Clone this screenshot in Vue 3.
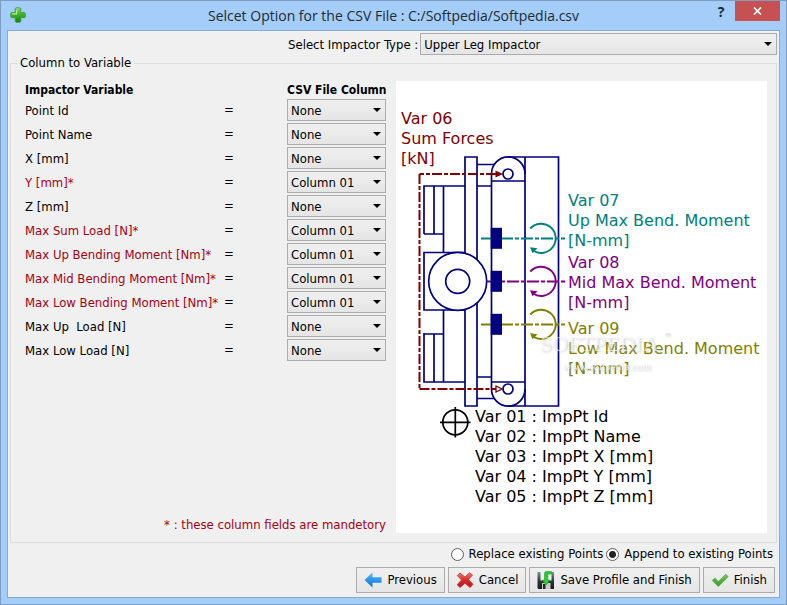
<script setup>
import { ref, reactive } from 'vue'

const impactor = ref('Upper Leg Impactor')
const mode = ref('append')

const rows = reactive([
  { id: 'point-id', label: 'Point Id', required: false, value: 'None' },
  { id: 'point-name', label: 'Point Name', required: false, value: 'None' },
  { id: 'x', label: 'X [mm]', required: false, value: 'None' },
  { id: 'y', label: 'Y [mm]*', required: true, value: 'Column 01' },
  { id: 'z', label: 'Z [mm]', required: false, value: 'None' },
  { id: 'sum-load', label: 'Max Sum Load [N]*', required: true, value: 'Column 01' },
  { id: 'up-moment', label: 'Max Up Bending Moment [Nm]*', required: true, value: 'Column 01' },
  { id: 'mid-moment', label: 'Max Mid Bending Moment [Nm]*', required: true, value: 'Column 01' },
  { id: 'low-moment', label: 'Max Low Bending Moment [Nm]*', required: true, value: 'Column 01' },
  { id: 'up-load', label: 'Max Up  Load [N]', required: false, value: 'None' },
  { id: 'low-load', label: 'Max Low Load [N]', required: false, value: 'None' },
])

const columns = ['None', 'Column 01']

const moments = [
  { y: 158, start: 85, color: '#008080', textY: 126, lines: ['Var 07', 'Up Max Bend. Moment', '[N-mm]'] },
  { y: 201, start: 91, color: '#800080', textY: 188, lines: ['Var 08', 'Mid Max Bend. Moment', '[N-mm]'] },
  { y: 244, start: 85, color: '#808000', textY: 254, lines: ['Var 09', 'Low Max Bend. Moment', '[N-mm]'] },
]

const points = ['Var 01 : ImpPt Id', 'Var 02 : ImpPt Name', 'Var 03 : ImpPt X [mm]', 'Var 04 : ImpPt Y [mm]', 'Var 05 : ImpPt Z [mm]']
</script>

<template>
  <div class="window">
    <header class="titlebar">
      <svg class="app-icon" viewBox="0 0 16 16" aria-hidden="true">
        <defs>
          <linearGradient id="plus" x1="0" y1="0" x2="0" y2="1">
            <stop offset="0" stop-color="#7fd063" />
            <stop offset="0.5" stop-color="#3fae2c" />
            <stop offset="1" stop-color="#16800f" />
          </linearGradient>
        </defs>
        <path d="M6 .8h4l.8.8v3.9h3.7l.8.8v3.6l-.8.8h-3.7v3.7l-.8.9H6l-.8-.9v-3.7H1.5l-.8-.8V6.300l.8-.8h3.700V1.600z" fill="url(#plus)" stroke="#3d9936" stroke-width=".8" />
        <path d="M6.500 2h2M2 6.900h4.600V3" stroke="#b5ec9c" stroke-width="1.200" fill="none" />
      </svg>
      <h1>Selcet Option for the CSV File : C:/Softpedia/Softpedia.csv</h1>
      <button class="help" type="button" aria-label="Help">?</button>
      <button class="close" type="button" aria-label="Close">
        <svg viewBox="0 0 9 8" aria-hidden="true"><path d="M1 .5l7 7M8 .5l-7 7" stroke="#fff" stroke-width="1.700" /></svg>
      </button>
    </header>

    <main class="content">
      <div class="type-row">
        <label for="impactor">Select Impactor Type :</label>
        <span class="combo wide">
          <select id="impactor" v-model="impactor"><option>Upper Leg Impactor</option></select>
        </span>
      </div>

      <fieldset class="group">
        <legend>Column to Variable</legend>
        <div class="group-body">
          <section class="mapping">
            <div class="row head">
              <strong>Impactor Variable</strong><span></span><strong>CSV File Column</strong>
            </div>
            <div v-for="row in rows" :key="row.id" class="row">
              <label :for="row.id" :class="{ required: row.required }">{{ row.label }}</label>
              <span>=</span>
              <span class="combo">
                <select :id="row.id" v-model="row.value">
                  <option v-for="c in columns" :key="c">{{ c }}</option>
                </select>
              </span>
            </div>
            <p class="note required">* : these column fields are mandetory</p>
          </section>

          <div class="picture">
            <svg viewBox="0 1 371 452" class="diagram" role="img" aria-label="Upper leg impactor">
              <g fill="none" stroke="#000080" stroke-width="1.700">
                <path d="M69 77h12v249H69zM129 77h33.500v249H129M112 77h17v249h-17" />
                <path d="M95.500 94v215M95.500 101H129M95.500 302H129M81 84.500h17M81 106h14.500M81 297h14.500M81 318.500h17" />
                <path d="M95.500 94a16.700 17 0 0 1 33.500 0M95.500 309a16.700 17 0 0 0 33.500 0" />
                <path d="M28 154V106h41M28 154h20M38 106v48M47.500 106v66.500M69 172.500H28V230h41M47.500 230v72M28 254h20M28 253v49h41M38 254v48" />
                <circle cx="61.700" cy="201.300" r="29" fill="#fff" />
                <circle cx="61.700" cy="201.300" r="12" />
              </g>
              <g stroke="#800000" fill="none" stroke-width="2">
                <path d="M100 94H23.500" stroke-dasharray="10 2 4 2" />
                <path d="M23.500 94V309" stroke-dasharray="10 2 4 2" />
                <path d="M23.500 309H100" stroke-dasharray="10 2 4 2" />
              </g>
              <path d="M99.500 90.500l7.500 3.500-7.500 3.500z" fill="#800000" />
              <path d="M100 306l6 3-6 3z" fill="#fff" stroke="#800000" stroke-width="1.300" />
              <g fill="#fff" stroke="#000080" stroke-width="1.700">
                <circle cx="112" cy="94" r="5" />
                <circle cx="112" cy="309" r="5" />
              </g>

              <g v-for="m in moments" :key="m.y">
                <path :d="`M${m.start} ${m.y + 0.5}H169`" :stroke="m.color" stroke-width="2" stroke-dasharray="12 2 4 2" />
                <path :d="`M134.300 ${m.y - 9.5}A14.600 14.600 0 1 1 137 ${m.y + 12.500}`" :stroke="m.color" stroke-width="1.900" fill="none" />
                <path :d="`M134 ${m.y + 9.300}l7.500 1-5 5z`" :fill="m.color" />
                <rect x="94.700" :y="m.y - 10.200" width="11.300" height="21" fill="#000080" />
                <text v-for="(line, i) in m.lines" :key="i" x="172" :y="m.textY + i * 20" :fill="m.color">{{ line }}</text>
              </g>

              <g fill="#800000">
                <text x="5" y="44">Var 06</text>
                <text x="5" y="64">Sum Forces</text>
                <text x="5" y="84">[kN]</text>
              </g>

              <g fill="none" stroke="#000" stroke-width="1.700">
                <circle cx="59.300" cy="342.300" r="12.500" />
                <path d="M44 342.300h30.500M59.300 327v30.500" />
              </g>
              <text v-for="(p, i) in points" :key="p" x="79" :y="342 + i * 20">{{ p }}</text>

              <g class="watermark">
                <text class="mark" x="144" y="271">SOFTPEDIA</text>
                <text class="tm" x="268" y="259">™</text>
                <text class="site" x="167" y="290">www.softpedia.com</text>
              </g>
            </svg>
          </div>
        </div>
      </fieldset>

      <div class="modes">
        <label><input v-model="mode" type="radio" name="mode" value="replace" />Replace existing Points</label>
        <label><input v-model="mode" type="radio" name="mode" value="append" />Append to existing Points</label>
      </div>

      <footer class="actions">
        <button type="button">
          <svg viewBox="0 0 18 18" aria-hidden="true">
            <defs><linearGradient id="blue" x1="0" y1="0" x2="0" y2="1"><stop offset="0" stop-color="#56b8fb" /><stop offset="1" stop-color="#0872d0" /></linearGradient></defs>
            <path d="M.5 9L8.500 1.500v4.700h9v5.600h-9v4.700z" fill="url(#blue)" />
          </svg>Previous
        </button>
        <button type="button">
          <svg viewBox="0 0 18 18" aria-hidden="true">
            <defs><linearGradient id="red" x1="0" y1="0" x2="0" y2="1"><stop offset="0" stop-color="#f47a70" /><stop offset=".5" stop-color="#d92b2b" /><stop offset="1" stop-color="#b90f12" /></linearGradient></defs>
            <path d="M4 2l5 4 4.500-4.200L16.500 4 12.500 8.500l4.500 4.800-2.800 3.200L9 12.300l-5 4.200-2.800-2.700L5.500 9 1.300 4.500z" fill="url(#red)" stroke="#c43131" stroke-width=".8" />
          </svg>Cancel
        </button>
        <button type="button">
          <svg viewBox="0 0 18 18" aria-hidden="true">
            <defs><linearGradient id="disk" x1="0" y1="0" x2="0" y2="1"><stop offset="0" stop-color="#8b8f92" /><stop offset=".5" stop-color="#34383b" /><stop offset="1" stop-color="#17191a" /></linearGradient></defs>
            <path d="M.5 1h16.500v17H1.500l-1-1z" fill="url(#disk)" />
            <path d="M3.500 1h11v8.500h-11z" fill="#edf1ed" />
            <path d="M5 12h8.500v6H5z" fill="#c8cbce" /><path d="M6 13h2.500v5H6z" fill="#25292b" />
            <path d="M14.500.5H9.500C7.800.5 7.500 1.500 7.500 3v6H5L9.300 14 13 9H10.800V4.500c0-1 .5-1.500 1.500-1.500H14.500z" fill="#24cf2a" stroke="#109418" stroke-width=".5" />
          </svg>Save Profile and Finish
        </button>
        <button type="button">
          <svg viewBox="0 0 18 18" aria-hidden="true">
            <defs><linearGradient id="green" x1="0" y1="0" x2="0" y2="1"><stop offset="0" stop-color="#79c76c" /><stop offset="1" stop-color="#329b22" /></linearGradient></defs>
            <path d="M1.200 9.500l2.600-2.600 3.500 3.600 7.500-7.300 2.400 2.500L7.300 15.400z" fill="url(#green)" stroke="#4aa83d" stroke-width=".7" />
          </svg>Finish
        </button>
      </footer>
    </main>
  </div>
</template>

<style>
body {
  margin: 0;
}
</style>

<style scoped>
.window {
  box-sizing: border-box;
  min-height: 100vh;
  display: flex;
  flex-direction: column;
  padding: 0 6px 6px;
  border: 1px solid #7f9dc3;
  background: #a4cdf9;
  color: #000;
  font: 13px/16px "DejaVu Sans Condensed", "DejaVu Sans", sans-serif;
}
.titlebar {
  display: flex;
  align-items: flex-start;
  height: 29px;
}
.app-icon {
  width: 16px;
  height: 16px;
  margin: 6px 0 0 3px;
}
h1 {
  flex: 1;
  margin: 0 0 0 54px;
  text-align: center;
  font: 14px/30px "Open Sans", "Noto Sans", sans-serif;
  color: #222a33;
}
.help,
.close {
  border: 0;
  padding: 0;
  background: none;
}
.help {
  width: 28px;
  height: 22px;
  color: #1d2733;
  font: bold 14px/22px "Open Sans", sans-serif;
}
.close {
  width: 45px;
  height: 20px;
  background: #c75050;
}
.close svg {
  display: block;
  width: 9px;
  height: 8px;
  margin: 0 auto;
}
.content {
  flex: 1;
  display: flex;
  flex-direction: column;
  padding: 2px;
  border: 1px solid #84abd8;
  background: #f0f0f0;
}
.type-row {
  display: flex;
  align-items: center;
  gap: 2px;
  padding-left: 278px;
}
.combo {
  position: relative;
  display: block;
}
.wide {
  flex: 1;
}
.combo::after {
  content: "";
  position: absolute;
  top: 9px;
  right: 5px;
  width: 8px;
  height: 4px;
  background: #000;
  clip-path: polygon(0 0, 100% 0, 50% 100%);
  pointer-events: none;
}
select {
  appearance: none;
  display: block;
  box-sizing: border-box;
  width: 100%;
  height: 22px;
  margin: 0;
  padding: 2px 16px 0 3px;
  border: 1px solid #acacac;
  border-radius: 0;
  background: linear-gradient(#f0f0f0, #e5e5e5);
  color: #000;
  font: inherit;
}
.type-row label,
.row label {
  padding-top: 2px;
}
.group {
  flex: 1;
  min-width: 0;
  display: flex;
  margin: 0;
  padding: 0 9px 9px 14px;
  border: 1px solid #dcdcdc;
}
legend {
  margin-left: -8px;
  padding: 0 3px;
}
.group-body {
  flex: 1;
  display: flex;
  gap: 10px;
  padding-top: 10px;
}
.mapping {
  width: 361px;
  display: flex;
  flex-direction: column;
}
.row {
  display: grid;
  grid-template-columns: 199px 1fr 99px;
  align-items: center;
  height: 24px;
  white-space: pre;
}
.head {
  height: 17px;
  font-size: 12px;
}
.required {
  color: #a80010;
}
.note {
  margin: auto 0 0;
  text-align: right;
}
.picture {
  flex: 1;
  background: #fff;
}
.diagram {
  display: block;
  width: 100%;
}
.diagram text {
  font-family: "DejaVu Sans", sans-serif;
  font-size: 16px;
}
.watermark {
  filter: drop-shadow(1px 1px 1px #aaa);
}
.diagram .mark {
  font-family: "Liberation Serif", serif;
  font-size: 22px;
  fill: #fff;
  fill-opacity: 0.6;
}
.diagram .tm {
  font-size: 8px;
  fill: #e4e4e4;
}
.diagram .site {
  font-family: "Liberation Serif", serif;
  font-size: 11px;
  fill: #fff;
  fill-opacity: 0.7;
}
.modes {
  display: flex;
  justify-content: flex-end;
  gap: 3px;
  padding: 3px 4px 5px 0;
}
.modes label {
  display: flex;
  align-items: center;
  gap: 5px;
}
.modes input {
  appearance: none;
  box-sizing: border-box;
  width: 13px;
  height: 13px;
  margin: 0;
  border: 1px solid #606060;
  border-radius: 50%;
  background: #fff;
}
.modes input:checked {
  background: radial-gradient(circle, #222 3px, #fff 4px);
}
.actions {
  display: flex;
  justify-content: flex-end;
  gap: 3px;
  padding: 0 2px 2px 0;
}
.actions button {
  display: flex;
  align-items: center;
  gap: 5px;
  height: 26px;
  padding: 0 7px;
  border: 1px solid #acacac;
  background: linear-gradient(#f0f0f0, #e5e5e5);
  color: #000;
  font: inherit;
}
.actions svg {
  width: 18px;
  height: 18px;
}
</style>
